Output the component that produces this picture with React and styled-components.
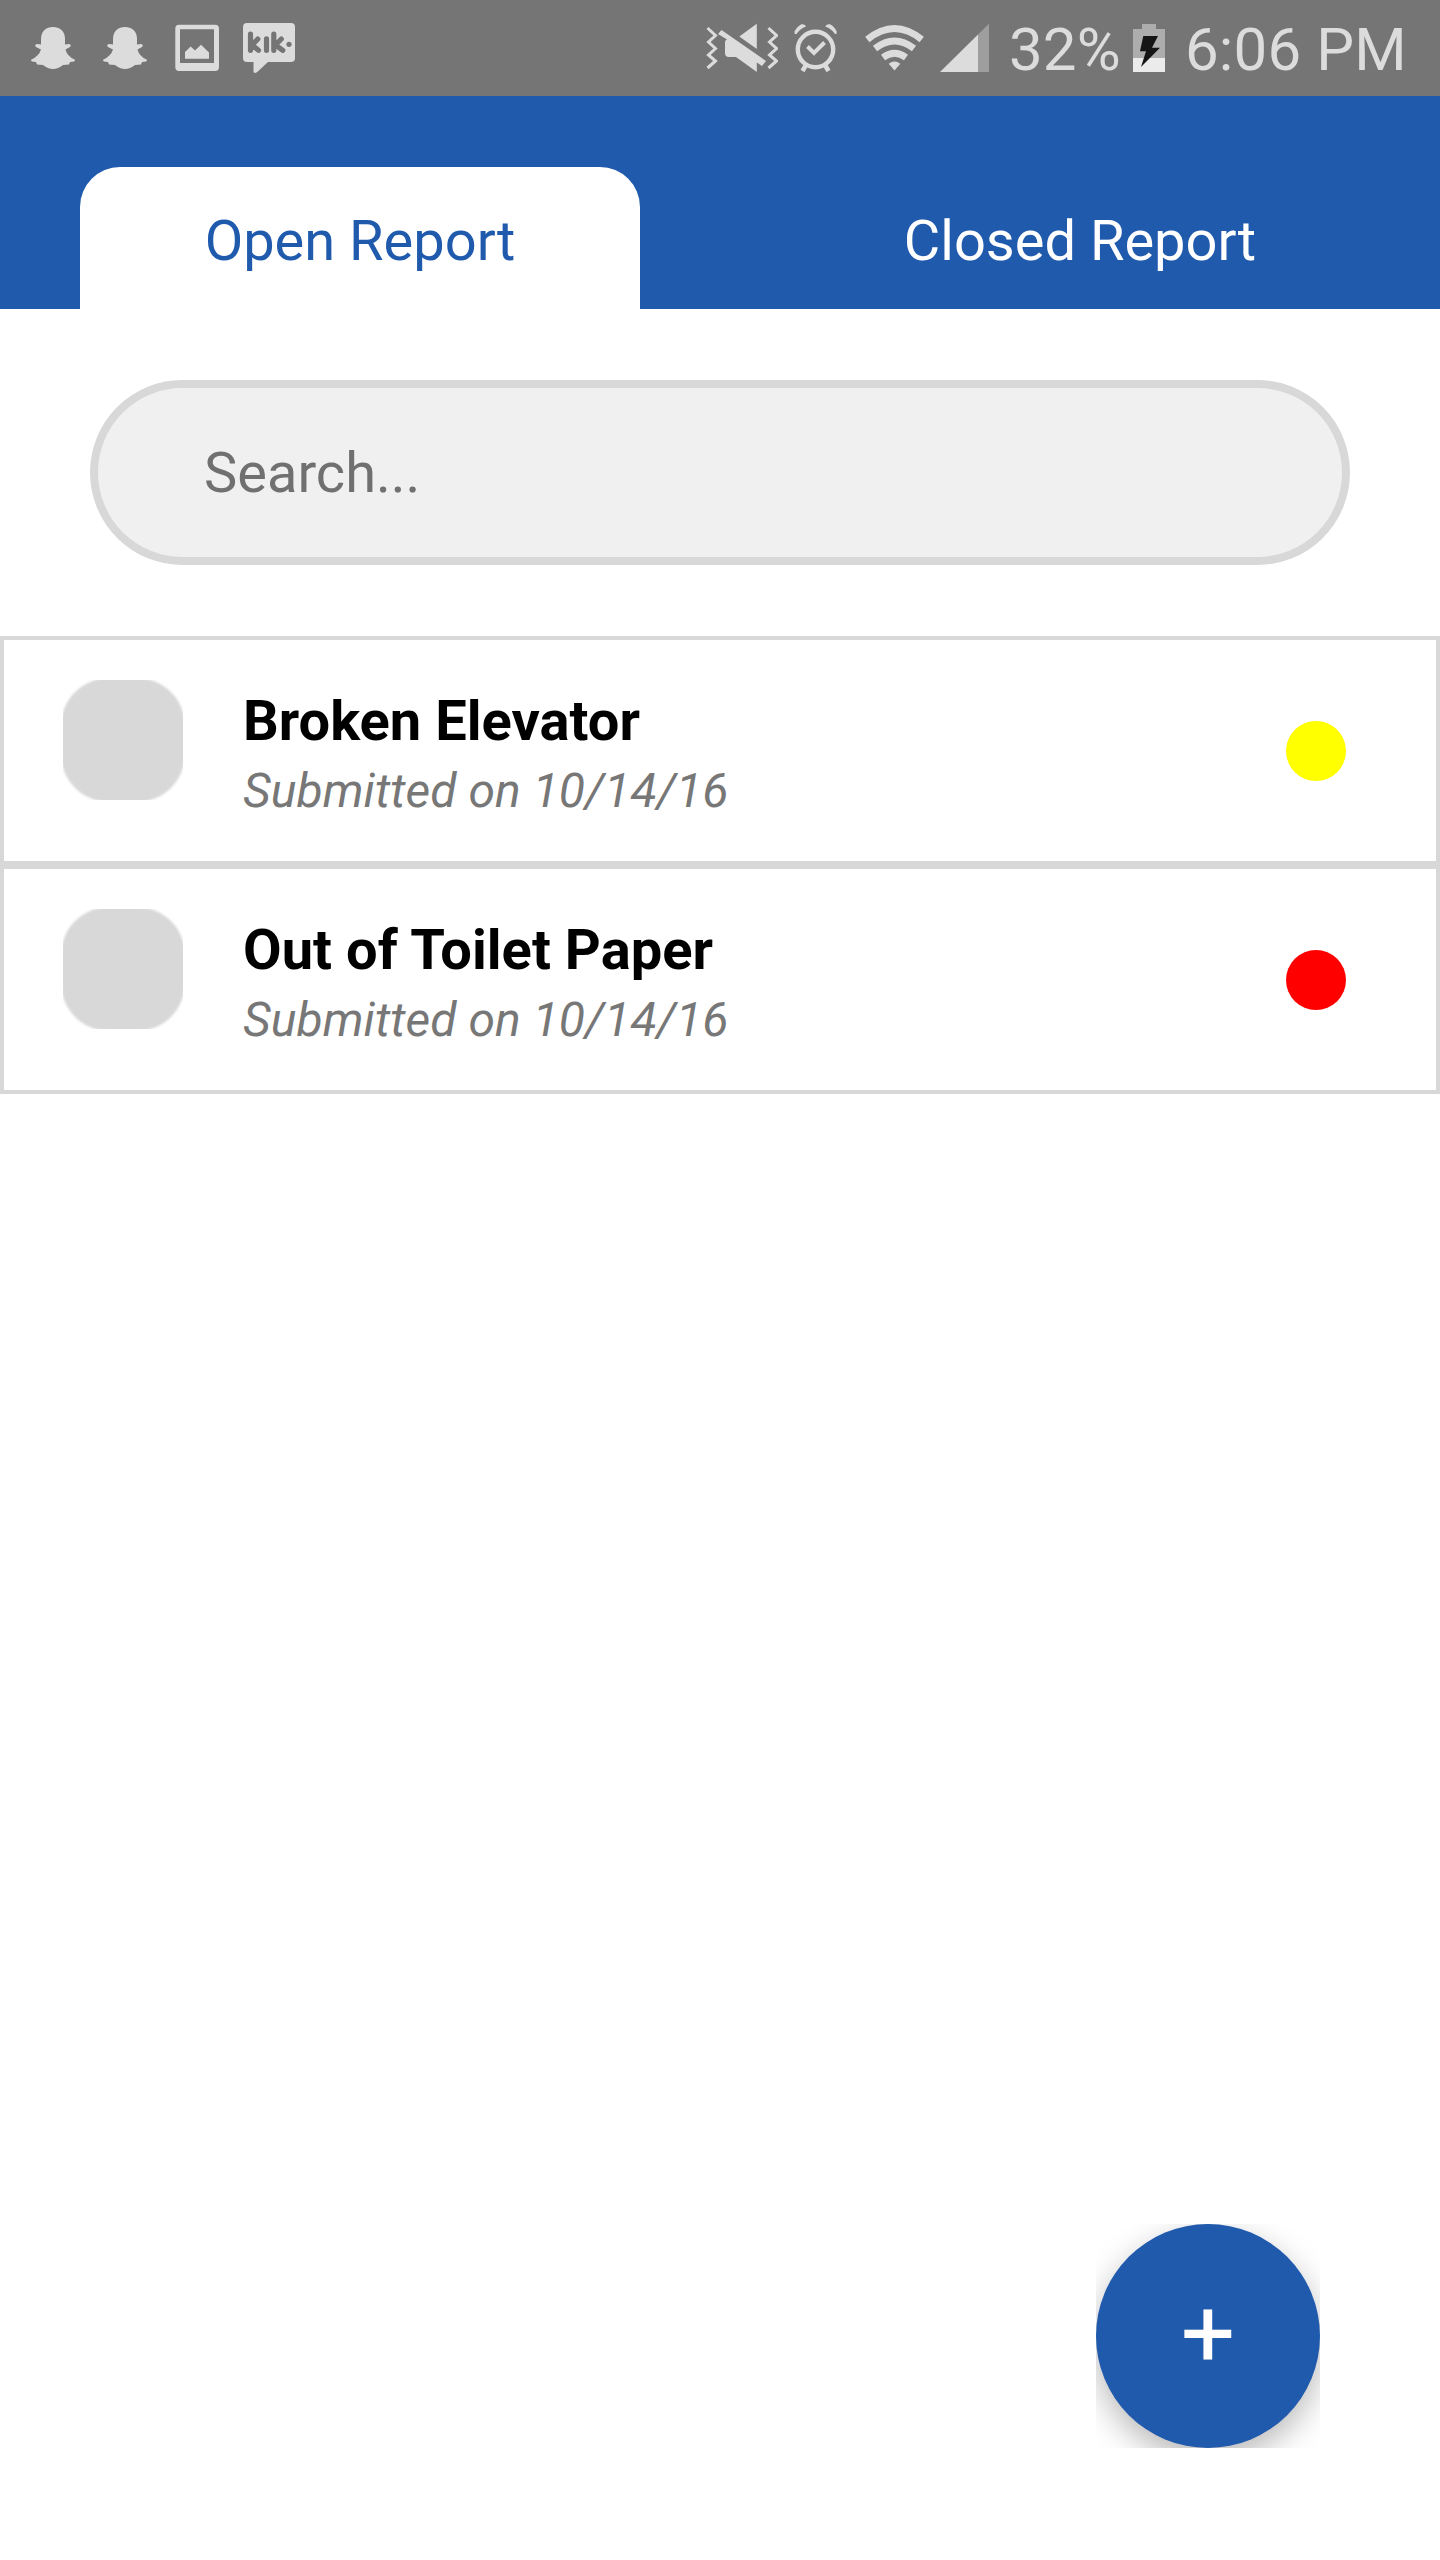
import React from 'react';
import styled, { createGlobalStyle } from 'styled-components';

const GlobalStyle = createGlobalStyle`
    * {
        box-sizing: border-box;
    }

    body {
        margin: 0;
        background-color: #fff;
        font-family: Roboto, sans-serif;
    }
`;

const Screen = styled.div`
    display: flex;
    flex-direction: column;
    width: 1440px;
    height: 2560px;
    background-color: #fff;
`;

const StatusBar = styled.div`
    display: flex;
    justify-content: space-between;
    height: 96px;
    padding: 0 36px 0 30px;
    background-color: #757575;
`;

const StatusGroup = styled.div`
    display: flex;
    align-items: center;
`;

const StatusIcon = styled.svg`
    display: block;
    flex: none;
    width: ${props => props.$width}px;
    height: 96px;
    margin-right: ${props => props.$gap || 0}px;
    fill: #dcdcdc;
`;

const StatusText = styled.span`
    width: ${props => props.$width}px;
    color: #dcdcdc;
    font-size: 60px;
    line-height: 70px;
    letter-spacing: 0.15px;
    white-space: nowrap;
    padding-top: 3px;
`;

const Tabs = styled.div`
    display: flex;
    gap: 160px;
    height: 213px;
    padding: 71px 80px 0;
    background-color: #1f5aad;
`;

const Tab = styled.button`
    flex: 1;
    border: 0;
    border-radius: 40px 40px 0 0;
    padding: 6px 0 0;
    background-color: ${props => (props.$active ? '#fff' : 'transparent')};
    color: ${props => (props.$active ? '#1f5aad' : '#fff')};
    font-family: inherit;
    font-size: 56px;
    line-height: 66px;
`;

const SearchInput = styled.input`
    width: 1260px;
    height: 185px;
    margin: 71px 90px;
    padding: 0 106px;
    border: 8px solid #d8d8d8;
    border-radius: 93px;
    background-color: #f0f0f0;
    font-family: inherit;
    font-size: 56px;

    &::placeholder {
        color: #707070;
        opacity: 1;
    }
`;

const Report = styled.div`
    display: flex;
    height: 229px;
    padding: 40px 90px 0 59px;
    border: 4px solid #d8d8d8;
`;

const Thumbnail = styled.div`
    width: 120px;
    height: 120px;
    overflow: hidden;

    &::before {
        content: '';
        display: block;
        width: 124px;
        height: 124px;
        margin: -2px;
        border-radius: 48px;
        background-color: #d8d8d8;
        filter: blur(1px);
    }
`;

const Details = styled.div`
    flex: 1;
    padding: 4px 0 0 60px;
`;

const Title = styled.h2`
    margin: 0;
    color: #000;
    font-size: 56px;
    font-weight: bold;
    line-height: 74px;
    letter-spacing: 0.04px;
`;

const Submitted = styled.p`
    margin: 0;
    padding-top: 1px;
    color: #777;
    font-size: 48px;
    font-style: italic;
    line-height: 64px;
    letter-spacing: 0.06px;
`;

const Status = styled.div`
    width: 60px;
    height: 60px;
    margin-top: 41px;
    border-radius: 50%;
    background-color: ${props => props.color};
`;

const ButtonArea = styled.div`
    align-self: flex-end;
    width: 224px;
    height: 224px;
    margin: auto 120px 112px 0;
    overflow: hidden;
`;

const AddButton = styled.button`
    display: flex;
    justify-content: center;
    align-items: center;
    width: 224px;
    height: 224px;
    border: 0;
    border-radius: 50%;
    padding: 0 0 4px;
    background-color: #1f5aad;
    box-shadow: 0 12px 32px rgba(0, 0, 0, 0.28);
    color: #fff;
    font-family: inherit;
    font-size: 96px;
`;

const reports = [
    { title: 'Broken Elevator', date: '10/14/16', color: '#ff0' },
    { title: 'Out of Toilet Paper', date: '10/14/16', color: '#f00' },
];

function Ghost({ gap }) {
    return (
        <StatusIcon $width={46} $gap={gap} viewBox="30 0 46 96">
            <path d="M53 27C61 27 65 32 65 39V44.500L69 44Q72 45 70 47L65.500 49.500Q67 56 74.500 59.500Q76 60.500 74 61.500L70 62L69 64.500L63 65Q58 69 53 69Q48 69 43 65L37 64.500L36 62L32 61.500Q30 60.500 31.500 59.500Q39 56 41 49.500L36 47Q34 45 37 44L41 44.500V39C41 32 45 27 53 27Z" />
        </StatusIcon>
    );
}

function Picture() {
    return (
        <StatusIcon $width={44} $gap={24} viewBox="175 0 44 96">
            <path fillRule="evenodd" d="M179 24.700H215Q219 24.700 219 28.700V67Q219 71 215 71H179Q175.300 71 175.300 67V28.700Q175.300 24.700 179 24.700ZM180 29.300V63H214V29.300Z" />
            <path d="M185 52L190.700 46.500L195 50.500L201 44.700L209 52.500V58.700H185Z" />
        </StatusIcon>
    );
}

function Kik() {
    return (
        <StatusIcon $width={52} viewBox="243 0 52 96">
            <path d="M247 23H291Q295 23 295 27V58Q295 62 291 62H268L257 72.300Q253.500 74 253.500 71V62H247Q243 62 243 58V27Q243 23 247 23Z" />
            <g fill="none" stroke="#757575" strokeWidth="5.200" strokeLinecap="round" strokeLinejoin="round">
                <path d="M250.500 34.200V50.300M257.800 39L252 45L258.500 50.300M266.500 38.800V50.300M273.800 34.200V50.300M281.300 39L275.500 45L282.800 50.300" />
            </g>
            <circle cx="289" cy="44.300" r="2.600" fill="#757575" />
        </StatusIcon>
    );
}

function Muted() {
    return (
        <StatusIcon $width={72} $gap={16} viewBox="706 0 72 96">
            <path d="M739.300 36.500L756.800 23.700V49Z" />
            <path d="M721.500 30L766 61L762 66L756.800 62.500V72L736 57H729Q725 57 725 53V42Q725 40 727 39.500L718 34Z" />
            <path d="M707.500 28L715.500 35.500L708.500 42L715.500 48.500L708.500 55L715.500 61L707.500 68M768.500 28L776.500 35.500L769.500 42L776.500 48.500L769.500 55L776.500 61L768.500 68" fill="none" stroke="#dcdcdc" strokeWidth="3" />
        </StatusIcon>
    );
}

function Alarm() {
    return (
        <StatusIcon $width={44} $gap={27} viewBox="794 0 44 96">
            <g fill="none" stroke="#dcdcdc">
                <circle cx="815.500" cy="49.500" r="17.700" strokeWidth="4.400" />
                <path d="M807.500 46.500L814 53L824.500 42.500" strokeWidth="4" />
                <path d="M806 65L802.500 71M825 65L828.500 71" strokeWidth="4.500" />
            </g>
            <path d="M794.700 34L794.500 31.500Q797 26.500 801.500 24.300Q804.500 23.500 806 26.500Q800 28.500 796.500 34ZM836.500 34L836.700 31.500Q834.500 26.500 830 24.300Q827 23.500 825.200 26.500Q831.500 28.500 835 34Z" />
        </StatusIcon>
    );
}

function Wifi() {
    return (
        <StatusIcon $width={60} $gap={15} viewBox="865 0 60 96">
            <g fill="none" stroke="#dcdcdc" strokeWidth="6.800">
                <path d="M867.300 39.500Q894.500 17.500 921.700 39.500" />
                <path d="M875 48.500Q894.500 33.500 914 48.500" />
                <path d="M883 57.500Q894.500 49 906 57.500" />
            </g>
            <path d="M888.700 63.700Q894.500 59.500 900.300 63.700L894.500 70.500Z" />
        </StatusIcon>
    );
}

function Signal() {
    return (
        <StatusIcon $width={49} $gap={20} viewBox="940 0 49 96">
            <path d="M940 72L978 34.500V72Z" />
            <path d="M978 34.500L989 23.700V72H978Z" fill="#9e9e9e" />
        </StatusIcon>
    );
}

function Battery() {
    return (
        <StatusIcon $width={32} $gap={20} viewBox="1133 0 32 96">
            <path d="M1133 29H1142V24H1156V29H1165V58H1133Z" fill="#adadad" />
            <path d="M1133 58H1165V72H1133Z" fill="#ebebeb" />
            <path d="M1143.300 36H1158L1152 47.700H1160L1141 67L1146 51.300H1140Z" fill="#151515" />
        </StatusIcon>
    );
}

function App() {
    return (
        <Screen>
            <GlobalStyle />
            <StatusBar>
                <StatusGroup>
                    <Ghost gap={26} />
                    <Ghost gap={27} />
                    <Picture />
                    <Kik />
                </StatusGroup>
                <StatusGroup>
                    <Muted />
                    <Alarm />
                    <Wifi />
                    <Signal />
                    <StatusText $width={124}>32%</StatusText>
                    <Battery />
                    <StatusText $width={219}>6:06 PM</StatusText>
                </StatusGroup>
            </StatusBar>
            <Tabs>
                <Tab $active>Open Report</Tab>
                <Tab>Closed Report</Tab>
            </Tabs>
            <SearchInput type="text" placeholder="Search..." />
            {reports.map(report => (
                <Report key={report.title}>
                    <Thumbnail />
                    <Details>
                        <Title>{report.title}</Title>
                        <Submitted>Submitted on {report.date}</Submitted>
                    </Details>
                    <Status color={report.color} />
                </Report>
            ))}
            <ButtonArea>
                <AddButton>+</AddButton>
            </ButtonArea>
        </Screen>
    )
}

export default App;
